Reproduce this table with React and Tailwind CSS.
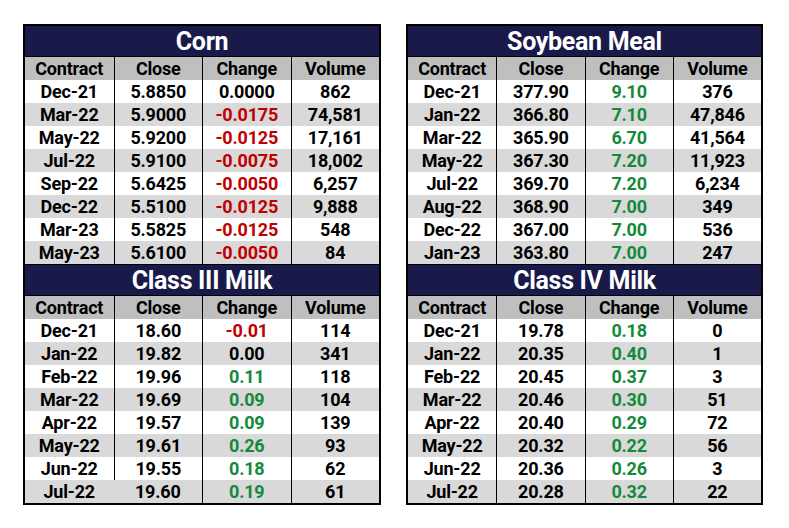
import React from 'react';

const corn = [
  ['Dec-21', '5.8850', '0.0000', '862'],
  ['Mar-22', '5.9000', '-0.0175', '74,581'],
  ['May-22', '5.9200', '-0.0125', '17,161'],
  ['Jul-22', '5.9100', '-0.0075', '18,002'],
  ['Sep-22', '5.6425', '-0.0050', '6,257'],
  ['Dec-22', '5.5100', '-0.0125', '9,888'],
  ['Mar-23', '5.5825', '-0.0125', '548'],
  ['May-23', '5.6100', '-0.0050', '84'],
];

const classIII = [
  ['Dec-21', '18.60', '-0.01', '114'],
  ['Jan-22', '19.82', '0.00', '341'],
  ['Feb-22', '19.96', '0.11', '118'],
  ['Mar-22', '19.69', '0.09', '104'],
  ['Apr-22', '19.57', '0.09', '139'],
  ['May-22', '19.61', '0.26', '93'],
  ['Jun-22', '19.55', '0.18', '62'],
  ['Jul-22', '19.60', '0.19', '61'],
];

const soy = [
  ['Dec-21', '377.90', '9.10', '376'],
  ['Jan-22', '366.80', '7.10', '47,846'],
  ['Mar-22', '365.90', '6.70', '41,564'],
  ['May-22', '367.30', '7.20', '11,923'],
  ['Jul-22', '369.70', '7.20', '6,234'],
  ['Aug-22', '368.90', '7.00', '349'],
  ['Dec-22', '367.00', '7.00', '536'],
  ['Jan-23', '363.80', '7.00', '247'],
];

const classIV = [
  ['Dec-21', '19.78', '0.18', '0'],
  ['Jan-22', '20.35', '0.40', '1'],
  ['Feb-22', '20.45', '0.37', '3'],
  ['Mar-22', '20.46', '0.30', '51'],
  ['Apr-22', '20.40', '0.29', '72'],
  ['May-22', '20.32', '0.22', '56'],
  ['Jun-22', '20.36', '0.26', '3'],
  ['Jul-22', '20.28', '0.32', '22'],
];

function changeColor(v) {
  const n = parseFloat(v);
  if (n < 0) return 'text-[#c00000]';
  if (n > 0) return 'text-[#138a3a]';
  return 'text-black';
}

function Section({ title, rows, noLastDivider = false }) {
  return (
    <div>
      {/* Title band */}
      <div className="h-[31px] bg-[#1a1a4a] flex items-center justify-center border-b border-black">
        <span className="text-white text-[25px] leading-none tracking-[-0.3px]">{title}</span>
      </div>

      {/* Header */}
      <div className="grid grid-cols-4 h-[23px] bg-[#bfbfbf] text-black">
        {['Contract', 'Close', 'Change', 'Volume'].map((h, i) => (
          <div key={h} className={`flex items-center justify-center ${i > 0 ? 'border-l border-black' : ''}`}>
            {h}
          </div>
        ))}
      </div>

      {/* Rows */}
      {rows.map((r, idx) => {
        const last = idx === rows.length - 1;
        return (
          <div
            key={r[0]}
            className={`grid grid-cols-4 h-[23px] text-black ${idx % 2 === 1 ? 'bg-[#d9d9d9]' : 'bg-white'}`}
          >
            <div className="flex items-center justify-center">{r[0]}</div>
            <div className={`flex items-center justify-center ${noLastDivider && last ? '' : 'border-l border-black'}`}>{r[1]}</div>
            <div className={`flex items-center justify-center border-l border-black ${changeColor(r[2])}`}>{r[2]}</div>
            <div className="flex items-center justify-center border-l border-black">{r[3]}</div>
          </div>
        );
      })}
    </div>
  );
}

function Board({ top, bottom, width }) {
  return (
    <div className={`border-2 border-black flex flex-col ${width}`}>
      <Section title={top.title} rows={top.rows} />
      <div className="h-px bg-black" />
      <Section title={bottom.title} rows={bottom.rows} noLastDivider={bottom.noLastDivider} />
    </div>
  );
}

export default function App() {
  return (
    <div
      className="w-[789px] h-[528px] bg-white flex items-start gap-[25px] pl-[23px] pt-[24px] font-bold text-[18px] leading-none tracking-[-0.2px]"
      style={{ fontFamily: 'Roboto, "Liberation Sans", sans-serif' }}
    >
      <Board
        width="w-[358px]"
        top={{ title: 'Corn', rows: corn }}
        bottom={{ title: 'Class III Milk', rows: classIII, noLastDivider: true }}
      />
      <Board
        width="w-[357px]"
        top={{ title: 'Soybean Meal', rows: soy }}
        bottom={{ title: 'Class IV Milk', rows: classIV }}
      />
    </div>
  );
}
